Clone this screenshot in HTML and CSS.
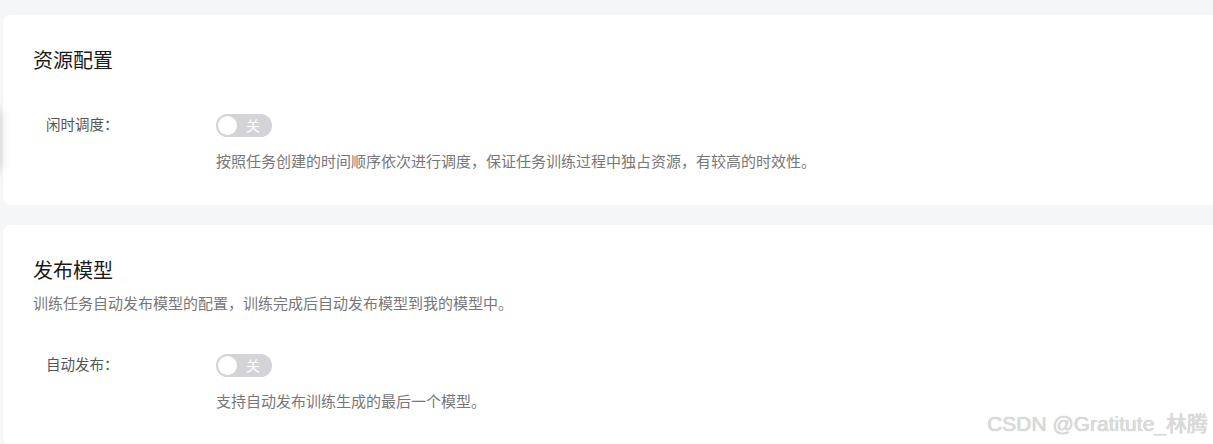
FILE: index.html
```html
<!DOCTYPE html>
<html lang="zh-CN">
<head>
  <meta charset="UTF-8" />
  <meta name="viewport" content="width=device-width, initial-scale=1.0"/>
  <title>训练配置</title>
  <link rel="stylesheet" href="styles.css">
</head>
<body>
  <div class="page">
    <div class="card">
      <h2 class="card-title">资源配置</h2>
      <div class="form-row">
        <label class="form-label">闲时调度：</label>
        <div class="form-control">
          <div class="switch"><span class="knob"></span><span class="switch-text">关</span></div>
          <p class="hint">按照任务创建的时间顺序依次进行调度，保证任务训练过程中独占资源，有较高的时效性。</p>
        </div>
      </div>
    </div>

    <div class="card">
      <h2 class="card-title">发布模型</h2>
      <p class="card-desc">训练任务自动发布模型的配置，训练完成后自动发布模型到我的模型中。</p>
      <div class="form-row">
        <label class="form-label">自动发布：</label>
        <div class="form-control">
          <div class="switch"><span class="knob"></span><span class="switch-text">关</span></div>
          <p class="hint">支持自动发布训练生成的最后一个模型。</p>
        </div>
      </div>
    </div>
  </div>

  <div class="side-float"></div>
  <div class="watermark">CSDN @Gratitute_林腾</div>
</body>
</html>
```

FILE: styles.css
```css
body {
  background-color: #f5f6f8;
  color: #1a1a1a;
  font-family: "Liberation Sans", "Noto Sans CJK SC", sans-serif;
  margin: 0;
  padding: 0;
  overflow: hidden;
}
.page {
  padding: 15px 0 0 3px;
  display: flex;
  flex-direction: column;
  gap: 20px;
}
.card {
  background-color: #fff;
  border-radius: 8px;
  width: 1240px;
  padding: 32px 30px 32px 30px;
  box-sizing: border-box;
}
.card-title {
  margin: 0;
  font-size: 20px;
  font-weight: normal;
  line-height: 28px;
  color: #1a1a1a;
}
.card-desc {
  margin: 8px 0 0 0;
  font-size: 15px;
  line-height: 22px;
  color: #777;
}
.form-row {
  display: flex;
  margin-top: 38px;
}
.form-label {
  width: 170px;
  padding-left: 13px;
  font-size: 14.5px;
  line-height: 24px;
  color: #555;
}
.form-control {
  display: flex;
  flex-direction: column;
  align-items: flex-start;
}
.switch {
  width: 56px;
  height: 23px;
  border-radius: 12px;
  background-color: #d4d4d8;
  display: flex;
  align-items: center;
  padding: 0 2px;
  box-sizing: border-box;
  margin-top: 1px;
}
.switch .knob {
  width: 19px;
  height: 19px;
  border-radius: 50%;
  background-color: #fff;
}
.switch .switch-text {
  color: #fff;
  font-size: 14px;
  margin-left: 9px;
  line-height: 1;
}
.hint {
  margin: 14px 0 0 0;
  font-size: 15px;
  line-height: 22px;
  color: #777;
}
.side-float {
  position: absolute;
  left: -60px;
  top: 110px;
  width: 60px;
  height: 60px;
  box-shadow: 0 0 10px rgba(0,0,0,0.18);
}
.watermark {
  position: absolute;
  right: 5px;
  bottom: 7px;
  font-size: 21px;
  color: #dcdcdc;
  text-shadow: 0 0 1px #b0b0b0;
}
```
